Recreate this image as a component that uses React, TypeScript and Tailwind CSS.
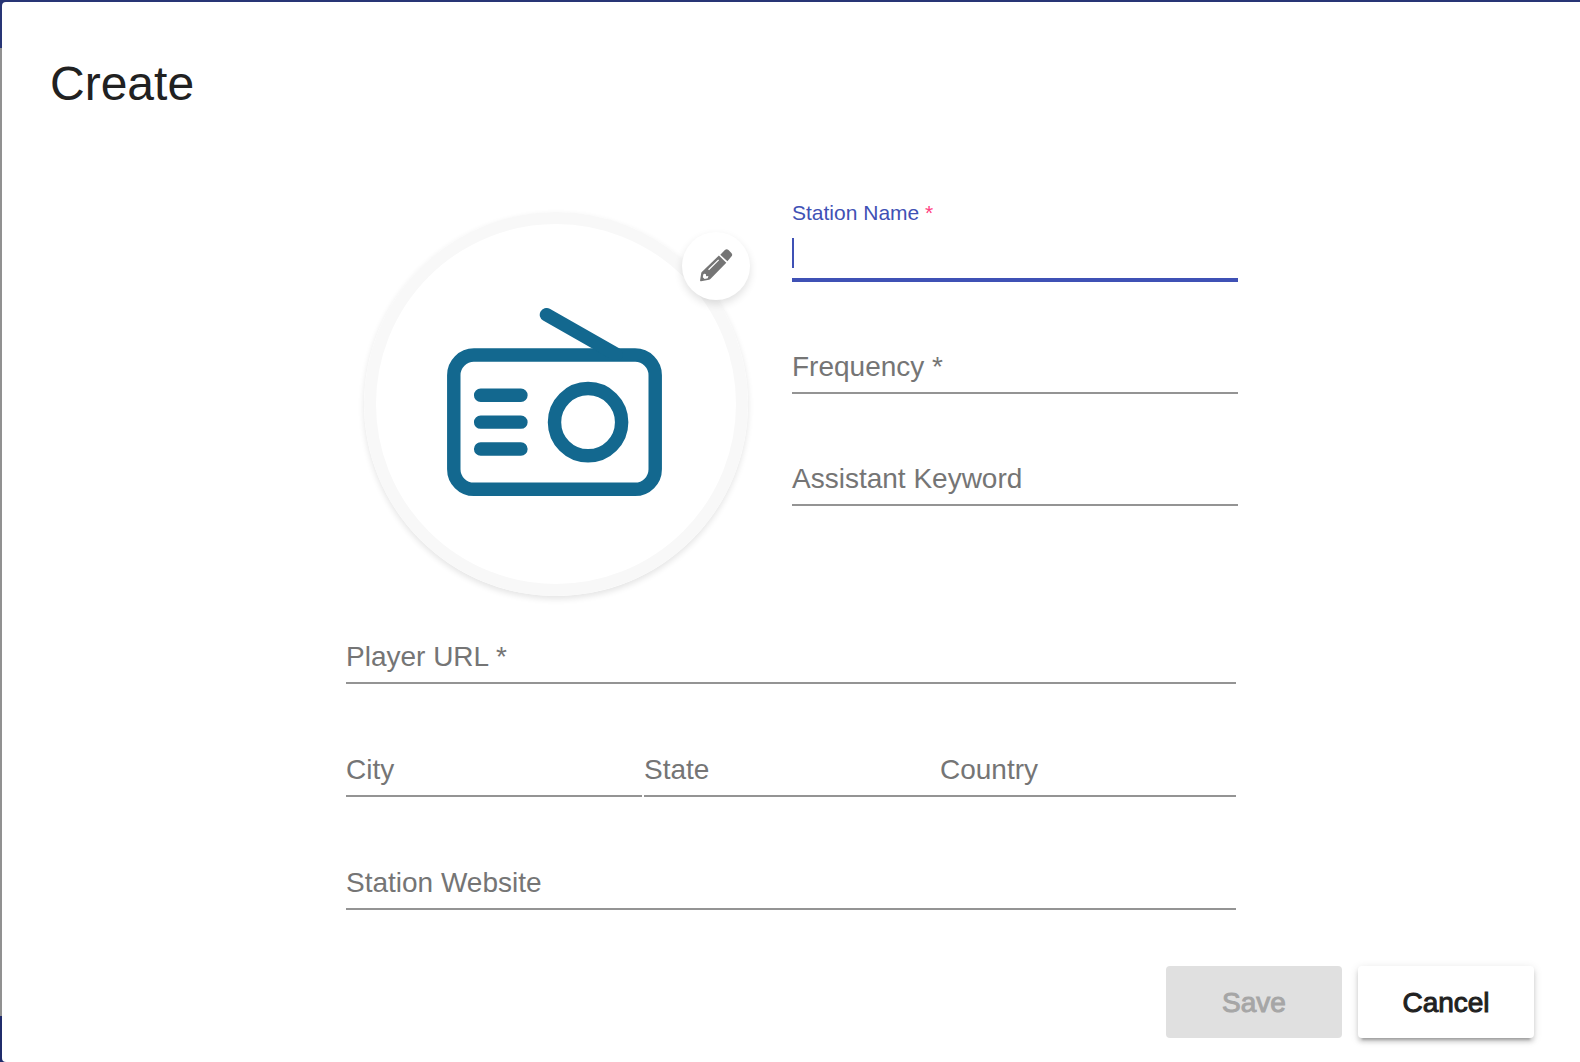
import { ReactNode } from "react";

type FieldProps = {
  id: string;
  label: string;
  required?: boolean;
  active?: boolean;
};

function Field({ id, label, required, active }: FieldProps) {
  if (active) {
    return (
      <div>
        <label htmlFor={id} className="mb-[11px] block text-[21px] leading-7 text-[#3f51b5]">
          {label} {required && <span className="text-[#ff4081]">*</span>}
        </label>
        <div className="flex border-b-4 border-[#3f51b5] pb-2">
          <span aria-hidden="true" className="h-[30px] w-0.5 bg-[#3f51b5]" />
          <input
            id={id}
            type="text"
            required={required}
            className="h-8 min-w-0 flex-1 bg-transparent text-[28px] caret-transparent outline-none"
          />
        </div>
      </div>
    );
  }
  return (
    <div className="grid border-b-2 border-[#949494] pt-10 pb-[9px]">
      <label
        htmlFor={id}
        className="pointer-events-none col-start-1 row-start-1 text-[28px] leading-8 text-[#757575]"
      >
        {label} {required && "*"}
      </label>
      <input
        id={id}
        type="text"
        required={required}
        className="col-start-1 row-start-1 h-8 w-full min-w-0 bg-transparent text-[28px] outline-none"
      />
    </div>
  );
}

function RadioIcon() {
  return (
    <svg
      viewBox="0 0 16 14"
      className="h-[188px] w-[215px]"
      fill="none"
      stroke="#13688f"
      strokeWidth="1"
      strokeLinecap="round"
      aria-hidden="true"
    >
      <rect x="0.5" y="3.5" width="15" height="10" rx="1.5" />
      <path d="M7.4 0.5 L12.6 3.45" />
      <path d="M2.5 6.5h3M2.5 8.5h3M2.5 10.5h3" />
      <circle cx="10.5" cy="8.5" r="2.5" />
    </svg>
  );
}

function PencilIcon() {
  return (
    <svg viewBox="0 0 34 34" className="size-[34px]" aria-hidden="true">
      <path
        fill="#757575"
        d="M21.3 5.7 25.9 1.1Q27.7-.5 29.5 1.1L32.4 4Q34 5.8 32.4 7.6L28.4 12.2Z"
      />
      <path
        fill="#757575"
        fillRule="evenodd"
        d="M19.9 6.4 27.3 13.8 11.4 29.9Q10.8 30.5 10 30.7L2 32.2Q.9 32.4 1.1 31.3L2.2 24.3Q2.3 23.6 2.8 23.1ZM4.3 25.4 3.8 28.3 5.6 29.9 8.8 29.2 9.4 27.1 7.2 27.3 6.8 25.1 5.1 24.7ZM19.2 10.4 9.1 20.3 10 21.2 20.1 11.3Z"
      />
    </svg>
  );
}

function ActionButton({ children, disabled }: { children: ReactNode; disabled?: boolean }) {
  return (
    <button
      type="button"
      disabled={disabled}
      className="h-[72px] w-44 rounded-sm bg-white pt-0.5 text-[28px] leading-8 text-[#212121] shadow-[0_6px_2px_-4px_rgba(0,0,0,0.2),0_4px_4px_0_rgba(0,0,0,0.14),0_2px_10px_0_rgba(0,0,0,0.12)] [-webkit-text-stroke:1px] disabled:bg-[#e0e0e0] disabled:text-[#a6a6a6] disabled:shadow-none"
    >
      {children}
    </button>
  );
}

export default function App() {
  return (
    <div className="grid min-h-screen font-['Liberation_Sans',Arial,sans-serif]">
      <div aria-hidden="true" className="col-start-1 row-start-1 flex flex-col">
        <div className="h-12 bg-[#283575]" />
        <div className="flex-1 bg-[#919191]" />
        <div className="h-[46px] bg-[#202c6b]" />
      </div>
      <div
        role="dialog"
        aria-labelledby="dialog-title"
        className="z-10 col-start-1 row-start-1 mt-0.5 ml-0.5 rounded-l bg-white pt-[50px] pr-[46px] pb-6 pl-12"
      >
        <h2 id="dialog-title" className="text-5xl leading-[64px] text-[#212121]">
          Create
        </h2>
        <form>
          <div className="mx-auto mt-[83px] max-w-[892px]">
            <div className="grid grid-cols-2">
              <div className="relative mt-[13px] ml-[18px] flex size-96 items-center justify-center rounded-full border-12 border-[#f8f8f8] pr-1 pb-1 shadow-[0_3px_6px_rgba(0,0,0,0.11)]">
                <RadioIcon />
                <button
                  type="button"
                  aria-label="Edit picture"
                  className="absolute top-2 -right-3.5 flex size-[68px] items-center justify-center rounded-full bg-white shadow-[0_4px_8px_rgba(0,0,0,0.12)]"
                >
                  <PencilIcon />
                </button>
              </div>
              <div className="flex flex-col gap-[29px]">
                <Field id="station-name" label="Station Name" required active />
                <Field id="frequency" label="Frequency" required />
                <Field id="keyword" label="Assistant Keyword" />
              </div>
            </div>
            <div className="mt-[5px] flex flex-col gap-[30px] pr-0.5">
              <Field id="player-url" label="Player URL" required />
              <div className="flex">
                <div className="mr-0.5 flex-1">
                  <Field id="city" label="City" />
                </div>
                <div className="flex-1">
                  <Field id="state" label="State" />
                </div>
                <div className="flex-1">
                  <Field id="country" label="Country" />
                </div>
              </div>
              <Field id="website" label="Station Website" />
            </div>
          </div>
          <div className="mt-14 flex justify-end gap-4">
            <ActionButton disabled>Save</ActionButton>
            <ActionButton>Cancel</ActionButton>
          </div>
        </form>
      </div>
    </div>
  );
}
